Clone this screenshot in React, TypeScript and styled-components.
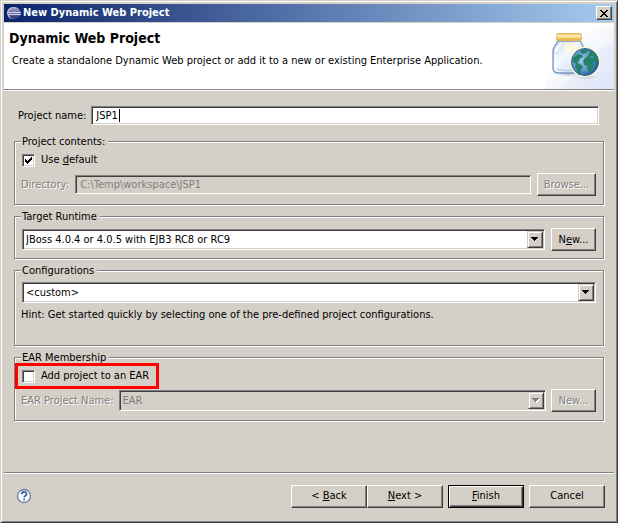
import React, { useState } from 'react';
import styled, { createGlobalStyle, css } from 'styled-components';

const face = '#d4d0c8';
const shadow = '#808080';
const dark = '#404040';
const fontStack = '"DejaVu Sans Condensed", "DejaVu Sans", Tahoma, sans-serif';

const GlobalStyle = createGlobalStyle`
  *, *::before, *::after { box-sizing: border-box; }
  html, body, #root { height: 100%; }
  body { margin: 0; background: ${face}; }
  body, button, input, select { font: 11px/14px ${fontStack}; color: #000; }
`;

const sunken = css`
  border: 1px solid;
  border-color: ${shadow} #fff #fff ${shadow};
  box-shadow: inset 1px 1px 0 ${dark}, inset -1px -1px 0 ${face};
`;

const raised = css`
  border: 1px solid;
  border-color: #fff ${dark} ${dark} #fff;
  box-shadow: inset -1px -1px 0 ${shadow};
`;

const disabledText = css`
  color: ${shadow};
  text-shadow: 1px 1px 0 #fff;
`;

const Dialog = styled.main`
  display: flex;
  flex-direction: column;
  min-height: 100%;
  padding: 3px;
  background: ${face};
  border: 1px solid;
  border-color: ${face} ${dark} ${dark} ${face};
  box-shadow: inset 1px 1px 0 #fff, inset -1px -1px 0 ${shadow};
`;

const TitleBar = styled.header`
  display: flex;
  align-items: center;
  gap: 1px;
  height: 18px;
  padding: 0 2px;
  background: linear-gradient(to right, #0a246a, #a6caf0);
`;

const TitleText = styled.span`
  flex: 1;
  font-weight: bold;
  color: #fff;
`;

const CloseButton = styled.button`
  display: grid;
  place-items: center;
  width: 16px;
  height: 14px;
  padding: 0;
  background: ${face};
  ${raised}
`;

const Banner = styled.section`
  display: flex;
  justify-content: space-between;
  height: 67px;
  margin-top: 1px;
  background: #fff;
  border-bottom: 1px solid ${shadow};
  box-shadow: 0 1px 0 #fff;
`;

const BannerText = styled.div`
  padding: 7px 0 0 5px;
`;

const Heading = styled.h1`
  margin: 0;
  font-size: 14px;
  line-height: 16px;
`;

const Description = styled.p`
  margin: 8px 0 0 3px;
  white-space: nowrap;
`;

const BannerArt = styled.svg`
  flex: none;
  width: 75px;
  height: 66px;
`;

const Form = styled.form`
  display: flex;
  flex: 1;
  flex-direction: column;
`;

const Content = styled.div`
  display: flex;
  flex: 1;
  flex-direction: column;
  padding: 15px 10px 0;
`;

const Row = styled.div<{ $gap?: number }>`
  display: flex;
  align-items: center;
  gap: ${p => p.$gap ?? 6}px;
`;

const NameRow = styled(Row)`
  padding: 1px 5px 0;
  margin-bottom: 8px;
`;

const Label = styled.label<{ $disabled?: boolean }>`
  flex: none;
  margin-left: -1px;
  white-space: nowrap;
  ${p => p.$disabled && disabledText}
`;

const TextFrame = styled.span`
  position: relative;
  display: flex;
  flex: 1;
  min-width: 0;
`;

const TextBox = styled.input`
  flex: 1;
  min-width: 0;
  height: 19px;
  padding: 0 4px;
  background: #fff;
  outline: none;
  caret-color: transparent;
  ${sunken}
  &:disabled {
    background: ${face};
    color: ${shadow};
  }
`;

const Caret = styled.span`
  position: absolute;
  top: 3px;
  width: 1px;
  height: 13px;
  background: #000;
  pointer-events: none;
`;

const Group = styled.fieldset<{ $bottom?: number }>`
  min-width: 0;
  margin: 0 0 3px;
  padding: 4px 7px ${p => p.$bottom ?? 8}px;
  border: 1px solid ${shadow};
  box-shadow: 1px 1px 0 #fff, inset 1px 1px 0 #fff;
`;

const Legend = styled.legend`
  margin-left: -1px;
  padding: 2px 3px 0 1px;
  line-height: 14px;
  background: ${face};
`;

const CheckLabel = styled.label<{ $highlight?: boolean }>`
  display: flex;
  align-items: center;
  gap: 6px;
  width: fit-content;
  height: 14px;
  margin-bottom: 6px;
  ${p => p.$highlight && css`
    position: relative;
    padding: 0 4px 0 1px;
    margin-left: -1px;
    outline: 3px solid #f00;
    outline-offset: 3px;
  `}
`;

const CheckFrame = styled.span`
  display: inline-grid;
  width: 13px;
  height: 13px;
  > * { grid-area: 1 / 1; }
  > svg { display: none; pointer-events: none; }
  > input:checked + svg { display: block; }
`;

const CheckBox = styled.input`
  appearance: none;
  width: 13px;
  height: 13px;
  margin: 0;
  background: #fff;
  ${sunken}
`;

const SelectFrame = styled.span`
  display: grid;
  flex: 1;
  min-width: 0;
  height: 21px;
  > * { grid-area: 1 / 1; }
`;

const Select = styled.select`
  appearance: none;
  width: 100%;
  height: 21px;
  padding: 1px 20px 0 3px;
  background: #fff;
  border-radius: 0;
  outline: none;
  ${sunken}
  &:disabled {
    background: ${face};
    color: ${shadow};
    opacity: 1;
  }
`;

const SelectArrow = styled.span`
  display: grid;
  place-items: center;
  justify-self: end;
  width: 16px;
  height: 17px;
  margin: 2px;
  background: ${face};
  border: 1px solid;
  border-color: ${face} ${dark} ${dark} ${face};
  box-shadow: inset 1px 1px 0 #fff, inset -1px -1px 0 ${shadow};
  pointer-events: none;
`;

const Hint = styled.p`
  margin: 5px 0 0 -1px;
  white-space: nowrap;
`;

const PushButton = styled.button<{ $width: number; $default?: boolean }>`
  flex: none;
  width: ${p => p.$width}px;
  height: 23px;
  padding: 0;
  background: ${face};
  ${raised}
  ${p => p.$default && css`
    border-color: #000;
    box-shadow: inset 1px 1px 0 #fff, inset -1px -1px 0 ${dark}, inset -2px -2px 0 ${shadow};
  `}
  &:disabled { ${disabledText} }
`;

const Footer = styled.footer`
  display: flex;
  align-items: center;
  justify-content: space-between;
  height: 47px;
  padding: 0 9px 0 12px;
  border-top: 1px solid ${shadow};
  box-shadow: inset 0 1px 0 #fff;
`;

const HelpButton = styled.button`
  display: grid;
  padding: 0;
  border: 0;
  background: none;
`;

function EclipseIcon() {
  return (
    <svg width="16" height="16" viewBox="0 0 16 16" aria-hidden="true">
      <defs>
        <linearGradient id="orb" x1="0" y1="0" x2="0" y2="1">
          <stop offset="0" stopColor="#b9aed4" />
          <stop offset="0.45" stopColor="#6f68a8" />
          <stop offset="1" stopColor="#2c2a72" />
        </linearGradient>
      </defs>
      <circle cx="7" cy="8" r="6" fill="#d3c2d4" />
      <circle cx="8.5" cy="8" r="6" fill="url(#orb)" />
      <path d="M3 7.500h12M3 9.500h12" stroke="#d5dcf2" />
    </svg>
  );
}

function ProjectArt() {
  return (
    <BannerArt viewBox="0 0 75 66" aria-hidden="true">
      <defs>
        <linearGradient id="swoosh" x1="0" y1="0" x2="1" y2="1">
          <stop offset="0.3" stopColor="#fff" />
          <stop offset="1" stopColor="#dfe6f7" />
        </linearGradient>
        <linearGradient id="glass" x1="0" y1="0" x2="1" y2="1">
          <stop offset="0" stopColor="#c3d7ee" />
          <stop offset="0.4" stopColor="#f4f9fe" />
          <stop offset="1" stopColor="#c0d4f0" />
        </linearGradient>
        <linearGradient id="lid" x1="0" y1="0" x2="0" y2="1">
          <stop offset="0" stopColor="#e6b64e" />
          <stop offset="0.35" stopColor="#fff3c4" />
          <stop offset="0.65" stopColor="#efc968" />
          <stop offset="1" stopColor="#e2ad45" />
        </linearGradient>
        <radialGradient id="sea" cx="0.4" cy="0.45" r="0.6">
          <stop offset="0" stopColor="#9ccbe8" />
          <stop offset="0.6" stopColor="#5a98c6" />
          <stop offset="1" stopColor="#235a90" />
        </radialGradient>
        <radialGradient id="cast">
          <stop offset="0" stopColor="#9aa2c0" />
          <stop offset="1" stopColor="#fff" stopOpacity="0" />
        </radialGradient>
      </defs>
      <path d="M6 66C9 31 38 4 75 2v64z" fill="url(#swoosh)" />
      <path d="M27 66C35 43 53 28 75 20v46z" fill="#d9e2f7" opacity="0.3" />
      <ellipse cx="29" cy="51" rx="18" ry="4" fill="url(#cast)" opacity="0.7" />
      <ellipse cx="47" cy="54" rx="17" ry="4" fill="url(#cast)" opacity="0.6" />
      <path d="M18.500 18h23c0 3 4 5 4 10v17c0 4-2 5-5 5H19c-3 0-5-1-5-5V28c0-5 4.500-7 4.500-10z" fill="url(#glass)" stroke="#7796c4" strokeWidth="1.300" />
      <path d="M17 29c0-5 4-6 5-9M16.500 31v13" stroke="#fff" strokeWidth="1.600" fill="none" />
      <path d="M25 20h11c3 3 5 5 5 9H26z" fill="#fff7d4" opacity="0.7" />
      <path d="M18 46c6 2 16 2 23 0" stroke="#a9c0df" fill="none" />
      <rect x="17.500" y="10.500" width="25" height="7" rx="2" fill="url(#lid)" stroke="#e5b85c" />
      <circle cx="46" cy="39" r="15.300" fill="#fbf8d2" />
      <circle cx="46" cy="39" r="13.500" fill="url(#sea)" stroke="#2b6592" />
      <path d="M35 34l4-3 4 1 1 2-3 1-1 3-2 1 2 2 3 1 1 2-2 3-1 4-2 1-1-5-2-3 1-3-3-2-1-3z" fill="#25806c" />
      <path d="M41 28l5-2 3 1-2 3-4 1z" fill="#25806c" />
      <path d="M49 33l2-4 2-1 4 4 2 5-1 4-2-3-2 2 1 2-2 4-2 3-2-1-1-5-3-1-1-4 2-3z" fill="#25806c" />
      <path d="M51 33l4 1-2 1z" fill="#6ea9cf" />
    </BannerArt>
  );
}

function Tick() {
  return (
    <svg width="13" height="13" viewBox="0 0 13 13" shapeRendering="crispEdges" aria-hidden="true">
      <path d="M3 5h1v1h1v1h1v-1h1v-1h1v-1h1v-1h1v3h-1v1h-1v1h-1v1h-1v1h-1v-1h-1v-1h-1z" />
    </svg>
  );
}

interface DropDownProps {
  id: string;
  value: string;
  label?: string;
  disabled?: boolean;
}

function DropDown({ id, value, label, disabled }: DropDownProps) {
  return (
    <SelectFrame>
      <Select id={id} aria-label={label} disabled={disabled} defaultValue={value}>
        <option>{value}</option>
      </Select>
      <SelectArrow>
        <svg width="8" height="5" viewBox="0 0 8 5" shapeRendering="crispEdges" aria-hidden="true">
          {disabled && <path d="M1 1h7v1h-1v1h-1v1h-1v1h-1v-1h-1v-1h-1v-1h-1z" fill="#fff" />}
          <path d="M0 0h7v1h-1v1h-1v1h-1v1h-1v-1h-1v-1h-1v-1h-1z" fill={disabled ? shadow : '#000'} />
        </svg>
      </SelectArrow>
    </SelectFrame>
  );
}

function textWidth(text: string) {
  const context = document.createElement('canvas').getContext('2d');
  if (!context) return 0;
  context.font = `11px ${fontStack}`;
  return Math.ceil(context.measureText(text).width);
}

function NameField() {
  const [name, setName] = useState('JSP1');
  return (
    <TextFrame>
      <TextBox id="name" value={name} onChange={e => setName(e.target.value)} autoFocus />
      <Caret style={{ left: textWidth(name) + 6 }} />
    </TextFrame>
  );
}

export default function App() {
  return (
    <>
      <GlobalStyle />
      <Dialog>
        <TitleBar>
          <EclipseIcon />
          <TitleText>New Dynamic Web Project</TitleText>
          <CloseButton type="button" aria-label="Close">
            <svg width="8" height="7" viewBox="0 0 8 7" shapeRendering="crispEdges" aria-hidden="true">
              <path d="M0 0h2v1h1v1h2v-1h1v-1h2v1h-1v1h-1v1h-1v1h1v1h1v1h1v1h-2v-1h-1v-1h-2v1h-1v1h-2v-1h1v-1h1v-1h1v-1h-1v-1h-1v-1h-1z" />
            </svg>
          </CloseButton>
        </TitleBar>
        <Banner>
          <BannerText>
            <Heading>Dynamic Web Project</Heading>
            <Description>
              Create a standalone Dynamic Web project or add it to a new or existing Enterprise Application.
            </Description>
          </BannerText>
          <ProjectArt />
        </Banner>
        <Form onSubmit={e => e.preventDefault()}>
          <Content>
            <NameRow $gap={5}>
              <Label htmlFor="name">Project name:</Label>
              <NameField />
            </NameRow>
            <Group>
              <Legend>Project contents:</Legend>
              <CheckLabel>
                <CheckFrame>
                  <CheckBox type="checkbox" defaultChecked />
                  <Tick />
                </CheckFrame>
                <span>Use <u>d</u>efault</span>
              </CheckLabel>
              <Row>
                <Label htmlFor="directory" $disabled>Director<u>y</u>:</Label>
                <TextBox id="directory" defaultValue="C:\Temp\workspace\JSP1" disabled />
                <PushButton type="button" $width={59} disabled>Browse...</PushButton>
              </Row>
            </Group>
            <Group $bottom={7}>
              <Legend>Target Runtime</Legend>
              <Row>
                <DropDown id="runtime" label="Target Runtime" value="JBoss 4.0.4 or 4.0.5 with EJB3 RC8 or RC9" />
                <PushButton type="button" $width={45}>N<u>e</u>w...</PushButton>
              </Row>
            </Group>
            <Group $bottom={23}>
              <Legend>Configurations</Legend>
              <DropDown id="configuration" label="Configurations" value="<custom>" />
              <Hint>Hint: Get started quickly by selecting one of the pre-defined project configurations.</Hint>
            </Group>
            <Group>
              <Legend>EAR Membership</Legend>
              <CheckLabel $highlight>
                <CheckFrame>
                  <CheckBox type="checkbox" />
                  <Tick />
                </CheckFrame>
                Add project to an EAR
              </CheckLabel>
              <Row $gap={5}>
                <Label htmlFor="ear" $disabled>EAR Project Name:</Label>
                <DropDown id="ear" value="EAR" disabled />
                <PushButton type="button" $width={45} disabled>New...</PushButton>
              </Row>
            </Group>
          </Content>
          <Footer>
            <HelpButton type="button" aria-label="Help">
              <svg width="16" height="16" viewBox="0 0 16 16" aria-hidden="true">
                <circle cx="8" cy="8" r="6.500" fill="#f4f8fd" stroke="#6a7f9f" strokeWidth="1.300" />
                <path d="M5.700 6.300c0-3.200 4.800-3.200 4.800-.3 0 1.600-2.300 1.700-2.300 3.500M8.200 10.700v1.600" fill="none" stroke="#3c5a94" strokeWidth="1.700" />
              </svg>
            </HelpButton>
            <Row $gap={5}>
              <Row $gap={0}>
                <PushButton type="button" $width={76}>&lt; <u>B</u>ack</PushButton>
                <PushButton type="button" $width={76}><u>N</u>ext &gt;</PushButton>
              </Row>
              <PushButton type="submit" $width={76} $default><u>F</u>inish</PushButton>
              <PushButton type="button" $width={76}>Cancel</PushButton>
            </Row>
          </Footer>
        </Form>
      </Dialog>
    </>
  );
}
